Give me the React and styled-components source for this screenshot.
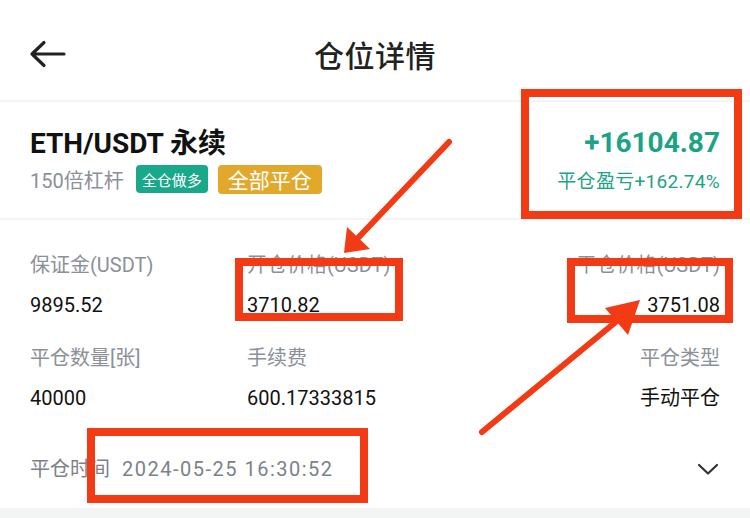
import styled, { createGlobalStyle } from 'styled-components';

const GlobalStyle = createGlobalStyle`
    html, body {
        margin: 0;
        padding: 0;
        background: #ffffff;
    }
    body {
        font-family: Roboto, "Noto Sans CJK SC", "Noto Sans", sans-serif;
        color: #151515;
    }
`;

const Page = styled.div`
    position: relative;
    width: 750px;
    height: 518px;
    overflow: hidden;
    background: #ffffff;
`;

const NavBar = styled.div`
    display: grid;
    grid-template-columns: 100px 1fr 100px;
    align-items: center;
    height: 92px;
    padding-top: 8px;
    border-bottom: 2px solid #f2f5f5;
`;

const BackButton = styled.div`
    display: flex;
    align-items: center;
    padding-left: 28px;
`;

const Title = styled.div`
    text-align: center;
    font-size: 30px;
    font-weight: 500;
    color: #222;
    letter-spacing: 0.5px;
`;

const Header = styled.div`
    display: flex;
    justify-content: space-between;
    align-items: center;
    height: 116px;
    padding: 0 30px;
    border-bottom: 2px solid #f2f5f5;
`;

const Column = styled.div`
    display: flex;
    flex-direction: column;
    align-items: ${p=>p.right ? 'flex-end' : 'flex-start'};
`;

const Symbol = styled.div`
    font-size: 28px;
    line-height: 34px;
    font-weight: 700;
    color: #111;
`;

const TagRow = styled.div`
    display: flex;
    align-items: center;
    gap: 10px;
    margin-top: 4px;
`;

const Leverage = styled.span`
    font-size: 20px;
    color: #8b9099;
    margin-right: 2px;
`;

const Tag = styled.span`
    display: inline-flex;
    align-items: center;
    justify-content: center;
    height: ${p=>p.big ? 29 : 28}px;
    padding: 0 ${p=>p.big ? 10 : 6}px;
    border-radius: 4px;
    font-size: ${p=>p.big ? 21 : 15}px;
    color: #fff;
    background: ${p=>p.color};
`;

const Pnl = styled.div`
    font-size: 28px;
    line-height: 34px;
    font-weight: 700;
    color: #1ca386;
`;

const PnlRate = styled.div`
    font-size: 19px;
    line-height: 24px;
    margin-top: 10px;
    color: #1ca386;
    letter-spacing: 0.3px;
`;

const InfoGrid = styled.div`
    display: grid;
    grid-template-columns: 217px 1fr 1fr;
    row-gap: 27px;
    padding: 32px 30px 0;
`;

const Cell = styled.div`
    display: flex;
    flex-direction: column;
    align-items: ${p=>p.right ? 'flex-end' : 'flex-start'};
`;

const Label = styled.div`
    font-size: 20px;
    line-height: 26px;
    color: #8b9099;
`;

const Value = styled.div`
    font-size: 20px;
    line-height: 26px;
    margin-top: 14px;
    color: #111;
`;

const DateRow = styled.div`
    display: flex;
    align-items: center;
    justify-content: space-between;
    padding: 45px 30px 26px;
`;

const DateText = styled.div`
    font-size: 20px;
    line-height: 26px;
    color: #7c818a;
    span {
        margin-left: 12px;
        letter-spacing: 1.5px;
    }
`;

const Strip = styled.div`
    height: 10px;
    background: #f3f4f4;
`;

const Marker = styled.div`
    position: absolute;
    left: ${p=>p.x}px;
    top: ${p=>p.y}px;
    width: ${p=>p.w}px;
    height: ${p=>p.h}px;
    border: 8px solid #f23a14;
    box-sizing: border-box;
    pointer-events: none;
`;

const ArrowLayer = styled.svg`
    position: absolute;
    left: 0;
    top: 0;
    pointer-events: none;
`;

const cells = [
    {label: '保证金(USDT)', value: '9895.52'},
    {label: '开仓价格(USDT)', value: '3710.82'},
    {label: '平仓价格(USDT)', value: '3751.08', right: true},
    {label: '平仓数量[张]', value: '40000'},
    {label: '手续费', value: '600.17333815'},
    {label: '平仓类型', value: '手动平仓', right: true},
];

const markers = [
    {x: 521, y: 89, w: 221, h: 130},
    {x: 235, y: 258, w: 168, h: 63},
    {x: 567, y: 258, w: 166, h: 65},
    {x: 87, y: 428, w: 281, h: 75},
];

export default function App() {
    return <>
      <GlobalStyle/>
      <Page>
        <NavBar>
          <BackButton>
            <svg width="40" height="30" viewBox="0 0 40 30">
              <path d="M36 15 H4 M16 3.5 L4 15 L16 26.5" fill="none" stroke="#222" strokeWidth="3.2"
                strokeLinecap="round" strokeLinejoin="round"/>
            </svg>
          </BackButton>
          <Title>仓位详情</Title>
          <div/>
        </NavBar>
        <Header>
          <Column>
            <Symbol>ETH/USDT 永续</Symbol>
            <TagRow>
              <Leverage>150倍杠杆</Leverage>
              <Tag color="#19a88a">全仓做多</Tag>
              <Tag big color="#e1a82b">全部平仓</Tag>
            </TagRow>
          </Column>
          <Column right>
            <Pnl>+16104.87</Pnl>
            <PnlRate>平仓盈亏+162.74%</PnlRate>
          </Column>
        </Header>
        <InfoGrid>
          {cells.map(c=><Cell key={c.label} right={c.right}>
            <Label>{c.label}</Label>
            <Value>{c.value}</Value>
          </Cell>)}
        </InfoGrid>
        <DateRow>
          <DateText>平仓时间<span>2024-05-25 16:30:52</span></DateText>
          <svg width="24" height="14" viewBox="0 0 24 14">
            <path d="M3 3 L12 11.5 L21 3" fill="none" stroke="#333" strokeWidth="2.2" strokeLinecap="round" strokeLinejoin="round"/>
          </svg>
        </DateRow>
        <Strip/>
        {markers.map((m, i)=><Marker key={i} {...m}/>)}
        <ArrowLayer width="750" height="518" viewBox="0 0 750 518">
          <line x1="449" y1="142" x2="358" y2="238" stroke="#f23a14" strokeWidth="6" strokeLinecap="round"/>
          <polygon points="344,253 347,227 370,249" fill="#f23a14"/>
          <line x1="482" y1="432" x2="623" y2="316" stroke="#f23a14" strokeWidth="6" strokeLinecap="round"/>
          <polygon points="640,300 605,308 628,335" fill="#f23a14"/>
        </ArrowLayer>
      </Page>
    </>;
}
